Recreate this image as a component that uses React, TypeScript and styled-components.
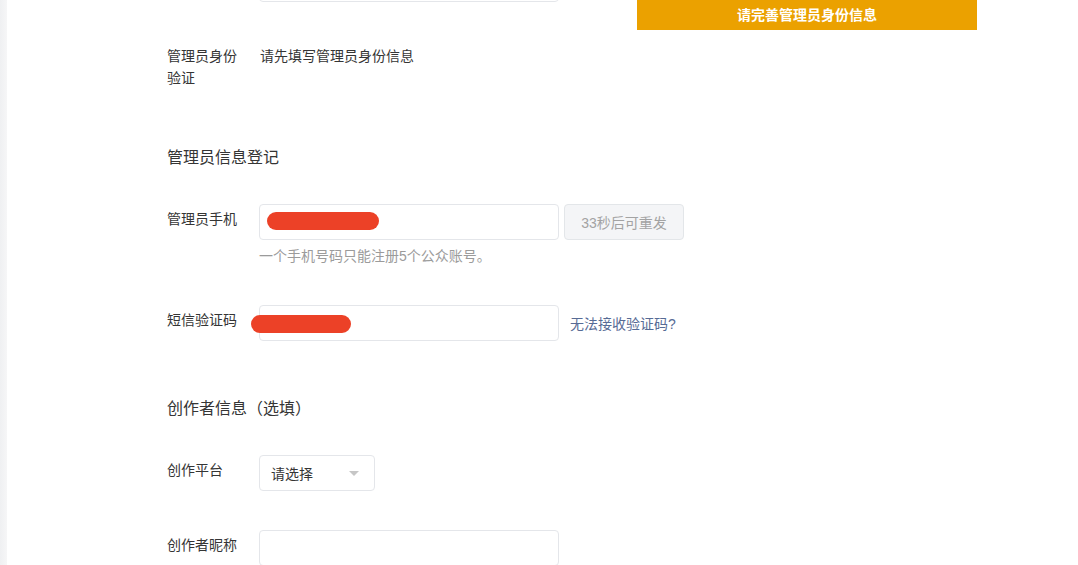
import styled, { createGlobalStyle } from "styled-components";

const GlobalStyle = createGlobalStyle`
  html, body {
    margin: 0;
    padding: 0;
    background: #fff;
    overflow: hidden;
  }
  body {
    font-family: "Liberation Sans", "Noto Sans CJK SC", sans-serif;
    font-size: 14px;
    color: #353535;
  }
`;

export default function App() {
  return (
    <>
      <GlobalStyle />
      <Page>
        <SideEdge />
        <Main>
          <Form>
            <Row>
              <Label />
              <Control>
                <TextInput />
              </Control>
            </Row>

            <Row>
              <Label>管理员身份验证</Label>
              <Control>
                <PlainText>请先填写管理员身份信息</PlainText>
              </Control>
            </Row>

            <SectionTitle>管理员信息登记</SectionTitle>

            <Row>
              <Label>管理员手机</Label>
              <Control>
                <Inline>
                  <InputWrap>
                    <TextInput />
                    <Redaction $left={8} $top={8} $width={112} />
                  </InputWrap>
                  <ResendButton disabled>33秒后可重发</ResendButton>
                </Inline>
                <Hint>一个手机号码只能注册5个公众账号。</Hint>
              </Control>
            </Row>

            <Row>
              <Label>短信验证码</Label>
              <Control>
                <Inline>
                  <InputWrap>
                    <TextInput />
                    <Redaction $left={-8} $top={10} $width={100} />
                  </InputWrap>
                  <HelpLink>无法接收验证码?</HelpLink>
                </Inline>
              </Control>
            </Row>

            <SectionTitle $tight>创作者信息（选填）</SectionTitle>

            <Row>
              <Label>创作平台</Label>
              <Control>
                <Select>
                  <span>请选择</span>
                  <Caret />
                </Select>
              </Control>
            </Row>

            <Row>
              <Label>创作者昵称</Label>
              <Control>
                <TextInput />
              </Control>
            </Row>
          </Form>
        </Main>
      </Page>
      <Toast>请完善管理员身份信息</Toast>
    </>
  );
}

const Page = styled.div`
  display: flex;
  width: 100%;
  height: 565px;
  overflow: hidden;
`;

const SideEdge = styled.div`
  width: 7px;
  flex: none;
  background: linear-gradient(to right, #eff0f2, #f6f6f7);
`;

const Main = styled.div`
  flex: 1;
  padding-left: 160px;
`;

const Form = styled.div`
  margin-top: -34px;
  display: flex;
  flex-direction: column;
`;

const Row = styled.div`
  display: flex;
  align-items: flex-start;
  margin-bottom: 39px;
`;

const Label = styled.div`
  width: 76px;
  padding-right: 16px;
  padding-top: 4px;
  line-height: 22px;
  font-size: 14px;
  color: #353535;
  flex: none;
`;

const Control = styled.div`
  display: flex;
  flex-direction: column;
`;

const PlainText = styled.div`
  padding-top: 4px;
  padding-left: 1px;
  line-height: 22px;
  color: #353535;
`;

const SectionTitle = styled.div<{ $tight?: boolean }>`
  padding-top: ${(p) => (p.$tight ? 17 : 18)}px;
  margin-bottom: 34px;
  font-size: 16px;
  line-height: 24px;
  color: #353535;
`;

const Inline = styled.div`
  display: flex;
  align-items: center;
`;

const InputWrap = styled.div`
  position: relative;
`;

const TextInput = styled.div`
  box-sizing: border-box;
  width: 300px;
  height: 36px;
  border: 1px solid #e4e6ea;
  border-radius: 4px;
  background: #fff;
`;

const Redaction = styled.div<{ $left: number; $top: number; $width: number }>`
  position: absolute;
  left: ${(p) => p.$left}px;
  top: ${(p) => p.$top}px;
  width: ${(p) => p.$width}px;
  height: 18px;
  border-radius: 9px;
  background: #ec4127;
`;

const ResendButton = styled.button`
  box-sizing: border-box;
  margin-left: 5px;
  width: 120px;
  height: 36px;
  border: 1px solid #e3e6e9;
  border-radius: 4px;
  background: #f4f5f7;
  color: #a3a3a3;
  font-family: inherit;
  font-size: 14px;
  padding: 0;
`;

const Hint = styled.div`
  margin-top: 6px;
  line-height: 20px;
  font-size: 14px;
  color: #9b9b9b;
`;

const HelpLink = styled.a`
  margin-left: 11px;
  font-size: 14px;
  color: #576b95;
  cursor: pointer;
`;

const Select = styled.div`
  box-sizing: border-box;
  width: 116px;
  height: 36px;
  border: 1px solid #e4e6ea;
  border-radius: 4px;
  padding: 0 12px 0 11px;
  display: flex;
  align-items: center;
  justify-content: space-between;
  color: #353535;
  font-size: 14px;
`;

const Caret = styled.span`
  width: 0;
  height: 0;
  margin-right: 3px;
  border-left: 5px solid transparent;
  border-right: 5px solid transparent;
  border-top: 5px solid #c6c6c6;
`;

const Toast = styled.div`
  position: fixed;
  top: 0;
  left: 637px;
  width: 340px;
  height: 30px;
  line-height: 30px;
  text-align: center;
  background: #eba100;
  color: #fff;
  font-weight: bold;
  font-size: 14px;
`;
